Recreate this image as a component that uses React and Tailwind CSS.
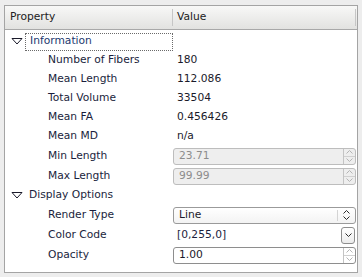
const font = { fontFamily: '"DejaVu Sans", "Liberation Sans", sans-serif' };

const Triangle = () => (
  <svg width="12" height="7" viewBox="0 0 12 7" className="shrink-0">
    <path d="M1 0.5 L11 0.5 L6 6 Z" fill="none" stroke="#1a1a2a" strokeWidth="1" strokeLinejoin="miter" />
  </svg>
);

const Chevron = ({ dir = 'down', color = '#2a2a2a' }) => (
  <svg width="7" height="4" viewBox="0 0 7 4">
    <path d={dir === 'down' ? 'M0.5 0.5 L3.5 3.5 L6.5 0.5' : 'M0.5 3.5 L3.5 0.5 L6.5 3.5'} fill="none" stroke={color} strokeWidth="1" />
  </svg>
);

const SpinBox = ({ value, disabled }) => (
  <div
    className={`flex h-[17px] w-[183px] rounded-[3px] border ${
      disabled ? 'border-[#bdbdbd] bg-[#eeeeee] text-[#8c8c8c]' : 'border-[#8e8e8e] bg-white text-[#1a1a2a]'
    }`}
  >
    <div className="flex flex-1 items-center pl-[5px] leading-none">{value}</div>
    <div className="flex w-[12px] flex-col border-l border-[#c4c4c4]">
      <div className="flex flex-1 items-center justify-center border-b border-[#d0d0d0]">
        <Chevron dir="up" color="#b4b4b4" />
      </div>
      <div className="flex flex-1 items-center justify-center">
        <Chevron dir="down" color="#b4b4b4" />
      </div>
    </div>
  </div>
);

const Combo = ({ value }) => (
  <div className="flex h-[17px] w-[183px] rounded-[3px] border border-[#9a9a9a] bg-gradient-to-b from-white to-[#f3f3f3] text-[#1a1a2a]">
    <div className="flex flex-1 items-center pl-[5px] leading-none">{value}</div>
    <div className="my-[2px] w-px bg-[#d4d4d4]" />
    <div className="flex w-[17px] flex-col items-center justify-center gap-[2px]">
      <Chevron dir="up" />
      <Chevron dir="down" />
    </div>
  </div>
);

const ColorCode = ({ value }) => (
  <div className="flex w-[183px] items-center">
    <span className="flex-1 pl-[4px]">{value}</span>
    <div className="mr-[1px] flex h-[17px] w-[14px] items-center justify-center rounded-[3px] border border-[#8e8e8e] bg-gradient-to-b from-white to-[#ececec]">
      <Chevron dir="down" />
    </div>
  </div>
);

const rows = [
  { type: 'group', label: 'Information', focus: true },
  { label: 'Number of Fibers', value: '180' },
  { label: 'Mean Length', value: '112.086' },
  { label: 'Total Volume', value: '33504' },
  { label: 'Mean FA', value: '0.456426' },
  { label: 'Mean MD', value: 'n/a' },
  { label: 'Min Length', widget: <SpinBox value="23.71" disabled /> },
  { label: 'Max Length', widget: <SpinBox value="99.99" disabled /> },
  { type: 'group', label: 'Display Options' },
  { label: 'Render Type', widget: <Combo value="Line" /> },
  { label: 'Color Code', widget: <ColorCode value="[0,255,0]" /> },
  { label: 'Opacity', widget: <SpinBox value="1.00" /> },
];

export default function App() {
  return (
    <div className="h-[277px] w-[362px] bg-[#ededed] pb-[4px] pl-[4px] pr-[4px] pt-[5px] text-[10.7px] text-[#1a1e3c]" style={font}>
      <div className="flex h-full flex-col border border-[#a4a4a4] bg-white">
        {/* Header */}
        <div className="flex h-[24px] shrink-0 items-center border-b border-[#a8a8a8] bg-gradient-to-b from-[#f8f8f7] to-[#e2e2e0] text-[#202020]">
          <div className="flex h-full w-[167px] items-center pl-[5px]">Property</div>
          <div className="h-[17px] w-px bg-[#c6c6c6]" />
          <div className="flex h-full flex-1 items-center pl-[4px]">Value</div>
          <div className="mr-[1px] h-[17px] w-px bg-[#c6c6c6]" />
        </div>

        {/* Body */}
        <div className="pt-[2px]">
          {rows.map((row) => {
            if (row.type === 'group') {
              return (
                <div key={row.label} className="flex h-[19px] items-center">
                  <div className="flex w-[168px] items-center pl-[6px]">
                    <Triangle />
                    <div
                      className={`ml-[2px] flex h-[18px] flex-1 items-center pl-[4px] ${
                        row.focus ? 'border border-dotted border-[#6a6a6a] text-[#22386e]' : ''
                      }`}
                    >
                      {row.label}
                    </div>
                  </div>
                </div>
              );
            }
            return (
              <div key={row.label} className={`flex items-center ${row.widget ? 'h-[20px]' : 'h-[19px]'}`}>
                <div className="w-[168px] pl-[43px]">{row.label}</div>
                <div className="flex flex-1 items-center">
                  {row.widget ? row.widget : <span className="pl-[4px] text-[#1a1a2a]">{row.value}</span>}
                </div>
              </div>
            );
          })}
        </div>
      </div>
    </div>
  );
}
